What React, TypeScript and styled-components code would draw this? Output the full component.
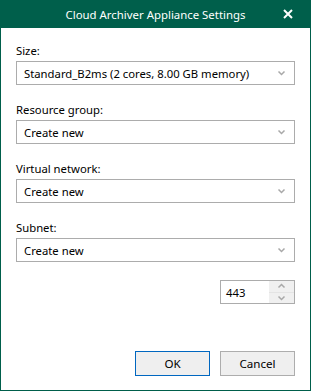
import { FC } from 'react';
import styled, { createGlobalStyle } from 'styled-components';

const GlobalStyle = createGlobalStyle`
    html, body {
        margin: 0;
        padding: 0;
        background: #ffffff;
    }
    body {
        font-family: "Noto Sans", "Open Sans", sans-serif;
        font-size: 11.3px;
        color: #000000;
    }
`;

const Window = styled.div`
    width: 311px;
    height: 391px;
    box-sizing: border-box;
    border: 1px solid #005f4b;
    border-top: none;
    display: flex;
    flex-direction: column;
    background: #ffffff;
`;

const TitleBar = styled.div`
    height: 28px;
    margin: 0 -1px;
    background: #005f4b;
    color: #ffffff;
    display: flex;
    align-items: center;
    justify-content: center;
    position: relative;
    font-size: 11.4px;
`;

const CloseButton = styled.div`
    position: absolute;
    right: 18px;
    top: 8px;
    width: 11px;
    height: 11px;
    display: flex;
    align-items: center;
    justify-content: center;
`;

const Body = styled.div`
    flex: 1;
    padding: 15px 15px 14px 15px;
    display: flex;
    flex-direction: column;
`;

const Field = styled.div`
    display: flex;
    flex-direction: column;
    margin-bottom: 17px;
`;

const Label = styled.label`
    line-height: 16px;
    height: 16px;
    margin-bottom: 2px;
`;

const Select = styled.div`
    height: 24px;
    box-sizing: border-box;
    border: 1px solid #acacac;
    display: flex;
    align-items: center;
    justify-content: space-between;
    padding: 0 8px 0 7px;
    background: #ffffff;
`;

const Value = styled.span`
    white-space: nowrap;
`;

const SpinRow = styled.div`
    display: flex;
    justify-content: flex-end;
    margin-top: 1px;
`;

const Spinner = styled.div`
    width: 75px;
    height: 24px;
    box-sizing: border-box;
    border: 1px solid #acacac;
    display: flex;
`;

const SpinValue = styled.div`
    flex: 1;
    display: flex;
    align-items: center;
    padding-left: 5px;
`;

const SpinButtons = styled.div`
    width: 25px;
    display: flex;
    flex-direction: column;
    background: #f0f0f0;
`;

const SpinButton = styled.div<{ $top?: boolean }>`
    flex: 1;
    display: flex;
    align-items: center;
    justify-content: center;
    border-bottom: ${p => (p.$top ? '1px solid #e4e4e4' : 'none')};
`;

const Footer = styled.div`
    margin-top: auto;
    display: flex;
    justify-content: flex-end;
    gap: 10px;
`;

const Button = styled.button<{ $default?: boolean }>`
    width: 75px;
    height: 25px;
    box-sizing: border-box;
    border: 1px solid ${p => (p.$default ? '#0067c0' : '#adadad')};
    background: #efefef;
    font-family: inherit;
    font-size: 11.6px;
    color: #000000;
    padding: 0;
`;

const Chevron: FC<{ up?: boolean }> = ({ up }) => (
    <svg width="9" height="6" viewBox="0 0 9 6">
        <path
            d={up ? 'M1.5 4.5 L4.5 1.5 L7.5 4.5' : 'M1.5 1.5 L4.5 4.5 L7.5 1.5'}
            fill="none"
            stroke="#a8a8a8"
            strokeWidth="1.5"
        />
    </svg>
);

const fields = [
    { label: 'Size:', value: 'Standard_B2ms (2 cores, 8.00 GB memory)' },
    { label: 'Resource group:', value: 'Create new' },
    { label: 'Virtual network:', value: 'Create new' },
    { label: 'Subnet:', value: 'Create new' },
];

const App: FC = () => {
    return (
        <Window>
            <GlobalStyle />
            <TitleBar>
                Cloud Archiver Appliance Settings
                <CloseButton>
                    <svg width="10" height="10" viewBox="0 0 10 10">
                        <path d="M1 1 L9 9 M9 1 L1 9" stroke="#ffffff" strokeWidth="2" />
                    </svg>
                </CloseButton>
            </TitleBar>
            <Body>
                {fields.map(f => (
                    <Field key={f.label}>
                        <Label>{f.label}</Label>
                        <Select>
                            <Value>{f.value}</Value>
                            <Chevron />
                        </Select>
                    </Field>
                ))}
                <SpinRow>
                    <Spinner>
                        <SpinValue>443</SpinValue>
                        <SpinButtons>
                            <SpinButton $top>
                                <Chevron up />
                            </SpinButton>
                            <SpinButton>
                                <Chevron />
                            </SpinButton>
                        </SpinButtons>
                    </Spinner>
                </SpinRow>
                <Footer>
                    <Button $default>OK</Button>
                    <Button>Cancel</Button>
                </Footer>
            </Body>
        </Window>
    );
};

export default App;
